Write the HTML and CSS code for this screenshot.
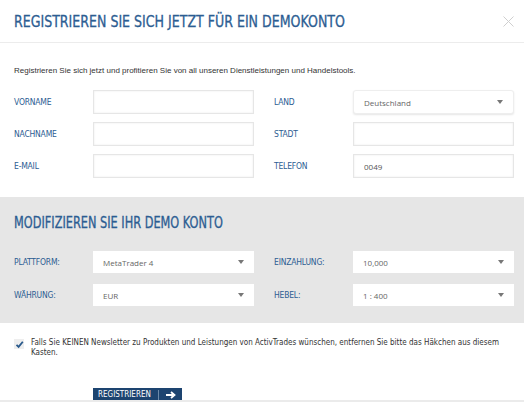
FILE: index.html
```html
<!DOCTYPE html>
<html lang="de">
<head>
    <meta charset="UTF-8">
    <meta name="viewport" content="width=device-width, initial-scale=1.0">
    <title>Demokonto</title>
    <link rel="stylesheet" href="styles.css">
</head>
<body>
    <div class="modal">
        <!--header-->
        <div class="modal-header">
            <h2 class="modal-title">Registrieren Sie sich jetzt für ein Demokonto</h2>
            <span class="close">
                <svg width="11" height="11" viewBox="0 0 11 11"><path d="M0.5 0.5 L10.5 10.5 M10.5 0.5 L0.5 10.5" stroke="#cfcfcf" stroke-width="1" fill="none"/></svg>
            </span>
        </div>

        <!--personal data-->
        <div class="modal-body">
            <p class="intro">Registrieren Sie sich jetzt und profitieren Sie von all unseren Dienstleistungen und Handelstools.</p>
            <div class="form-grid">
                <div class="field"><label>Vorname</label><input type="text" class="input"></div>
                <div class="field"><label>Land</label>
                    <div class="select select-round"><span>Deutschland</span><i class="caret"></i></div>
                </div>
                <div class="field"><label>Nachname</label><input type="text" class="input"></div>
                <div class="field"><label>Stadt</label><input type="text" class="input"></div>
                <div class="field"><label>E-Mail</label><input type="text" class="input"></div>
                <div class="field"><label>Telefon</label><input type="text" class="input" value="0049"></div>
            </div>
        </div>

        <!--demo account-->
        <div class="demo">
            <h3 class="demo-title">Modifizieren Sie Ihr Demo Konto</h3>
            <div class="form-grid form-grid-demo">
                <div class="field"><label>Plattform:</label>
                    <div class="select"><span>MetaTrader 4</span><i class="caret"></i></div>
                </div>
                <div class="field"><label>Einzahlung:</label>
                    <div class="select"><span>10,000</span><i class="caret"></i></div>
                </div>
                <div class="field"><label>Währung:</label>
                    <div class="select"><span>EUR</span><i class="caret"></i></div>
                </div>
                <div class="field"><label>Hebel:</label>
                    <div class="select"><span>1 : 400</span><i class="caret"></i></div>
                </div>
            </div>
        </div>

        <!--newsletter-->
        <div class="newsletter">
            <span class="checkbox">
                <svg width="9" height="9" viewBox="0 0 9 9"><path d="M1.5 4.8 L3.6 6.9 L7.8 1.8" stroke="#2a5a8c" stroke-width="1.8" fill="none"/></svg>
            </span>
            <p>Falls Sie KEINEN Newsletter zu Produkten und Leistungen von ActivTrades wünschen, entfernen Sie bitte das Häkchen aus diesem Kasten.</p>
        </div>

        <div class="actions">
            <button type="button" class="btn-submit">
                <span>Registrieren</span>
                <span class="btn-divider"></span>
                <svg width="10" height="8" viewBox="0 0 10 8"><path d="M0 4 H7 M5 1 L8.5 4 L5 7" stroke="#fff" stroke-width="1.8" fill="none"/></svg>
            </button>
        </div>
    </div>
</body>
</html>
```

FILE: styles.css
```css
body {
    margin: 0;
    width: 524px;
    height: 402px;
    overflow: hidden;
    background-color: #ebebeb;
    font-family: 'Liberation Sans', Arial, sans-serif;
}

.modal {
    background-color: white;
    height: 400px;
    overflow: hidden;
}

.modal-header {
    height: 42px;
    border-bottom: 1px solid #ececec;
    display: flex;
    justify-content: space-between;
    align-items: center;
    padding: 0 10px 0 14px;
}

/* narrow heading font is not installed, so the condensed face is squeezed a bit */
.modal-title,
.demo-title {
    margin: 0;
    display: inline-block;
    font-family: 'DejaVu Sans Condensed', sans-serif;
    font-weight: normal;
    text-transform: uppercase;
    color: #2c5d92;
    transform-origin: left center;
    -webkit-text-stroke: 0.3px #2c5d92;
}

.modal-title {
    font-size: 16px;
    transform: scaleX(0.875);
}

.close {
    display: flex;
}

.modal-body {
    padding: 22px 10px 19px 14px;
}

.intro {
    margin: 0 0 13px;
    font-size: 8px;
    line-height: 12px;
    color: #333;
}

.form-grid {
    display: grid;
    grid-template-columns: 240px 240px;
    column-gap: 20px;
    row-gap: 8px;
}

.field {
    display: flex;
    align-items: center;
}

.field label {
    width: 79px;
    flex-shrink: 0;
    font-family: 'DejaVu Sans Condensed', sans-serif;
    font-size: 8.5px;
    letter-spacing: -0.2px;
    text-transform: uppercase;
    color: #2c5d92;
}

.input {
    box-sizing: border-box;
    width: 161px;
    height: 24px;
    margin: 0;
    border: 1px solid #e6e6e6;
    box-shadow: inset 0 0 2px #e8e8e8;
    padding: 0 10px;
    font-family: 'Open Sans', sans-serif;
    font-size: 8px;
    color: #555;
    outline: none;
}

.select {
    box-sizing: border-box;
    width: 161px;
    height: 22px;
    background-color: white;
    display: flex;
    justify-content: space-between;
    align-items: center;
    padding: 0 10px;
    font-family: 'Open Sans', sans-serif;
    font-size: 8px;
    color: #666;
}

.select-round {
    height: 24px;
    border: 1px solid #eee;
    border-radius: 3px;
    box-shadow: 0 1px 2px #e6e6e6;
}

.caret {
    width: 0;
    height: 0;
    border-left: 3px solid transparent;
    border-right: 3px solid transparent;
    border-top: 4px solid #777;
}

.demo {
    box-sizing: border-box;
    height: 126px;
    background-color: #e6e6e6;
    padding: 17px 10px 0 14px;
}

.demo-title {
    font-size: 15px;
    transform: scaleX(0.84);
    margin-bottom: 19px;
}

.form-grid-demo {
    row-gap: 11px;
}

.newsletter {
    display: flex;
    align-items: flex-start;
    gap: 7px;
    padding: 15px 20px 0 14px;
}

.checkbox {
    flex-shrink: 0;
    width: 10px;
    height: 10px;
    background-color: #eee;
    display: flex;
    align-items: center;
    justify-content: center;
    margin-top: 1px;
}

.newsletter p {
    margin: 0;
    font-family: 'DejaVu Sans Condensed', sans-serif;
    font-size: 8px;
    line-height: 10px;
    color: #333;
}

.actions {
    padding: 30px 0 0 93px;
}

.btn-submit {
    display: flex;
    align-items: flex-start;
    gap: 7px;
    height: 24px;
    width: 89px;
    padding: 2px 0 0 5px;
    border: none;
    background-color: #1d4470;
    color: white;
    font-family: 'DejaVu Sans Condensed', sans-serif;
    font-size: 8px;
    line-height: 9px;
    text-transform: uppercase;
    cursor: pointer;
}

.btn-submit svg {
    margin-top: 1px;
}

.btn-divider {
    width: 1px;
    height: 22px;
    background-color: #6d8aaa;
}
```
